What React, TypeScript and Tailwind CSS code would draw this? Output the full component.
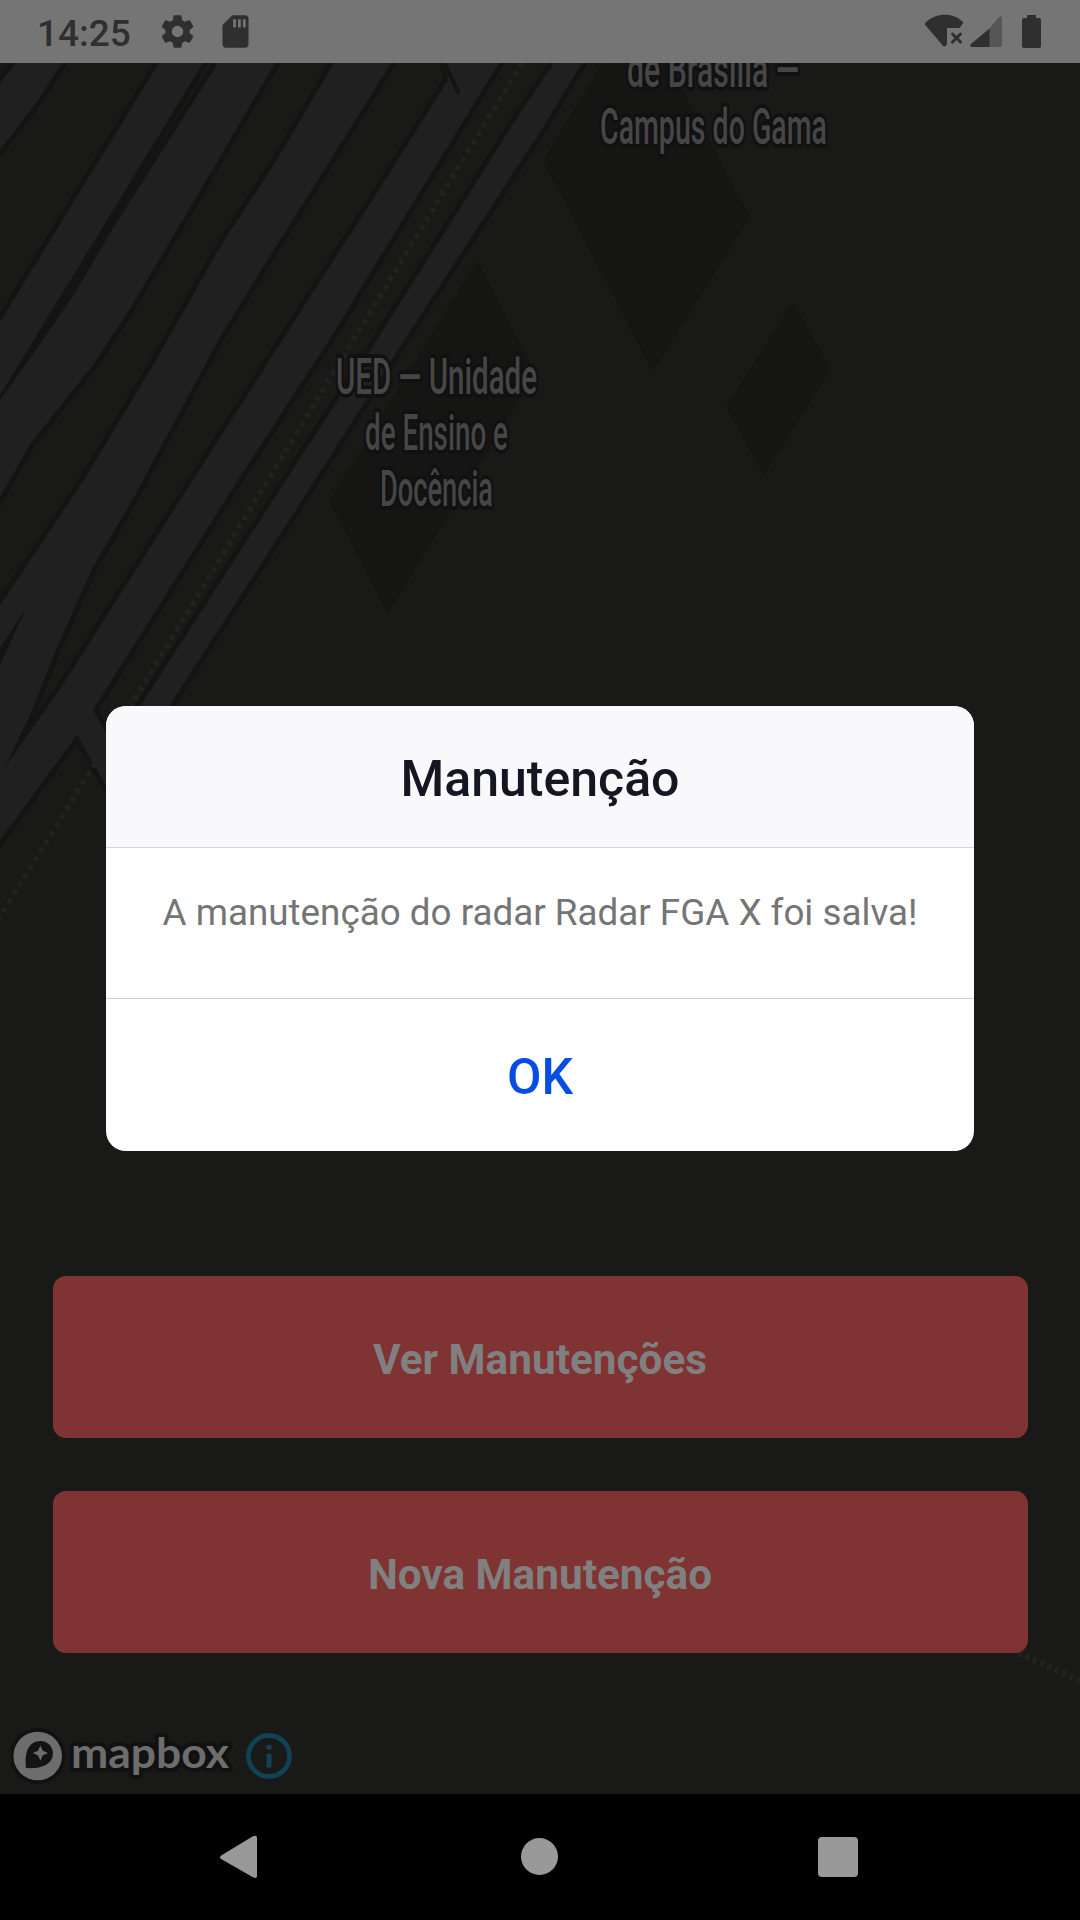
const ROAD = "#202020";
const CASING = "#141413";
const LAND = "#191917";

const roads = [
  "15.5,63 62,63 38,100 0,150 -20,178 -20,109 0,83",
  "159,63 203,63 93,243 0,395 -20,427 -20,355 0,322",
  "218,63 275,63 220,157 165,250 131,307 93,365 31,443 0,497 -20,530 -20,430 0,400 38,347 75,293 110,233",
  "334,63 391,63 324,170 255,280 220,337 134,497 93,567 57,647 31,713 5,767 -20,800 -20,710 0,665 26,608 0,648 -20,675 -20,636 0,605 84,480 152,367 194,293 220,247 275,163",
  "441,50 507,50 499,63 413,203 331,337 238,480 93,710 122,760 122,813 77,735 0,840 -20,868 -20,800 5,767 31,730 64,683 193,480 310,297 379,190 448,80",
  "563,50 590,50 540,132 396,353 315,480 141,750 112,750 286,480 375,343 520,113",
];

const labels = [
  { text: "de Brasília —", x: 627, y: 86.5, w: 172 },
  { text: "Campus do Gama", x: 600, y: 143.5, w: 227 },
  { text: "UED — Unidade", x: 336, y: 394, w: 201 },
  { text: "de Ensino e", x: 365, y: 450, w: 143 },
  { text: "Docência", x: 380, y: 505.5, w: 113 },
];

function MapCanvas() {
  return (
    <svg className="absolute inset-0" width="1080" height="1731" viewBox="0 63 1080 1731">
      <rect x="0" y="63" width="1080" height="1731" fill={LAND} />
      <g fill="#151513" stroke="#121210" strokeWidth="0.6">
        <polygon points="603,63 544,161 653,370 749,217 668,63" />
        <polygon points="793,303 830,369 764,474 727,407" />
        <polygon points="477,262 535,373 388,612 330,501" />
      </g>
      <g fill={CASING} stroke={CASING} strokeWidth="10">
        {roads.map((p) => <polygon key={p} points={p} />)}
      </g>
      <g fill={ROAD}>
        {roads.map((p) => <polygon key={p} points={p} />)}
      </g>
      <path d="M442 58L459 94" stroke={CASING} strokeWidth="4" />
      <g stroke="#212121" strokeWidth="5.500" strokeDasharray="5 5" fill="none">
        <path d="M522 63L131 705" />
        <path d="M95 763L-5 925" />
        <path d="M1018 1653L1084 1682" strokeWidth="7" strokeDasharray="4.5 3.5" />
      </g>
      <g fontFamily="Roboto, sans-serif" fontSize="50" fontWeight="500" fill="#464646" stroke="#111111" strokeWidth="8" strokeLinejoin="round" paintOrder="stroke">
        {labels.map((l) => (
          <text key={l.text} x={l.x} y={l.y} textLength={l.w} lengthAdjust="spacingAndGlyphs">{l.text}</text>
        ))}
      </g>
    </svg>
  );
}

function StatusBar() {
  return (
    <header className="flex h-[63px] shrink-0 items-center bg-[#757575] pl-[37px] pr-[38px] text-[#2f2f2f]">
      <span className="pt-[3px] text-[37px] font-medium leading-none">14:25</span>
      <svg className="ml-[27px] size-[39px]" viewBox="0 0 24 24" fill="currentColor">
        <path d="M19.43 12.98c.04-.32.07-.64.07-.98s-.03-.66-.07-.98l2.11-1.65c.19-.15.24-.42.12-.64l-2-3.46c-.12-.22-.39-.3-.61-.22l-2.49 1c-.52-.4-1.08-.73-1.69-.98l-.38-2.65C14.46 2.18 14.25 2 14 2h-4c-.25 0-.46.18-.49.42l-.38 2.65c-.61.25-1.17.59-1.69.98l-2.49-1c-.23-.09-.49 0-.61.22l-2 3.46c-.13.22-.07.49.12.64l2.11 1.65c-.04.32-.07.65-.07.98s.03.66.07.98l-2.11 1.65c-.19.15-.24.42-.12.64l2 3.46c.12.22.39.3.61.22l2.49-1c.52.4 1.08.73 1.69.98l.38 2.65c.03.24.24.42.49.42h4c.25 0 .46-.18.49-.42l.38-2.65c.61-.25 1.17-.59 1.69-.98l2.49 1c.23.09.49 0 .61-.22l2-3.46c.12-.22.07-.49-.12-.64zM12 15.5A3.5 3.5 0 1 1 12 8.500a3.500 3.500 0 0 1 0 7z" />
      </svg>
      <svg className="ml-[19px] size-[39px]" viewBox="0 0 24 24" fill="currentColor">
        <path d="M18 2h-8L4.020 8 4 20c0 1.100.9 2 2 2h12c1.100 0 2-.9 2-2V4c0-1.100-.9-2-2-2z" />
        <path d="M11.400 4.500v5M14.400 4.500v5M17.400 4.500v5" stroke="#757575" strokeWidth="1.700" />
      </svg>
      <span className="flex-1" />
      <svg width="118" height="36" viewBox="0 0 118 36" fill="currentColor">
        <path d="M1.500 8.500C12-2 30-2 39.500 8.500L35.500 14H23V30q-2.500 5-5.500 0L.8 10.500z" />
        <path d="M28.500 20L36.500 28M36.500 20L28.500 28" stroke="currentColor" strokeWidth="3" strokeLinecap="round" />
        <path d="M78 4L78 31q0 2-2 2H65V15L75 3q3-2 3 1z" fill="#565656" />
        <path d="M65.500 14.500V33H48q-3-.5-1-3z" />
        <path d="M103 1h9v3h3q2 0 2 2v26q0 2-2 2h-15q-2 0-2-2V6q0-2 2-2h3z" />
      </svg>
    </header>
  );
}

function MapboxMark() {
  return (
    <div className="absolute bottom-[13px] left-[11px] flex h-[50px] items-center">
      <svg width="235" height="58" viewBox="0 0 235 58">
        <circle cx="26.700" cy="29" r="28" fill="#111" />
        <circle cx="26.700" cy="29" r="24.300" fill="#6d6d6d" />
        <path d="M15 41C13 25 18 14 29.500 14A12.500 12.500 0 0 1 37 36.500C31 41 22 41.500 15 41z" fill="#131313" />
        <path d="M29.400 18.500l2.300 5.300 5.300 2.300-5.300 2.300-2.300 5.300-2.300-5.300-5.300-2.300 5.300-2.300z" fill="#6d6d6d" />
        <text x="60" y="40.500" textLength="158" lengthAdjust="spacingAndGlyphs" fontFamily="Lato, sans-serif" fontSize="42" fontWeight="700" fill="#6d6d6d" stroke="#111111" strokeWidth="8" strokeLinejoin="round" paintOrder="stroke">mapbox</text>
      </svg>
      <svg width="46" height="46" viewBox="0 0 46 46">
        <circle cx="23" cy="23" r="20.500" fill="none" stroke="#0f4252" strokeWidth="4.800" />
        <path d="M20.500 12h5v4.500h-5zM20.500 20.500h5v14h-5z" fill="#0f4252" />
      </svg>
    </div>
  );
}

export default function App() {
  return (
    <div className="flex h-[1920px] w-[1080px] flex-col overflow-hidden bg-black font-[Roboto,sans-serif]">
      <StatusBar />
      <main className="relative flex h-[1731px] shrink-0 flex-col items-center overflow-hidden">
        <MapCanvas />
        <section className="relative mt-[643px] flex h-[445px] w-[868px] shrink-0 flex-col overflow-hidden rounded-[20px] bg-white text-center">
          <h1 className="flex h-[142px] items-center justify-center border-b border-[#d5d5d9] bg-[#f9f9fb] pt-[5px] text-[50px] font-medium text-[#141622]">Manutenção</h1>
          <p className="flex h-[150px] items-center justify-center whitespace-nowrap pb-[20px] text-[36.8px] text-[#757575]">A manutenção do radar Radar FGA X foi salva!</p>
          <button className="flex flex-1 items-center justify-center border-t border-[#cfcfd3] pt-[5px] text-[50px] font-medium text-[#054de3]">OK</button>
        </section>
        <div className="relative mt-[125px] flex w-[975px] flex-col gap-[53px]">
          <button className="h-[162px] rounded-[13px] bg-[#7f3333] pt-[6px] text-[42.3px] font-bold text-[#808080]">Ver Manutenções</button>
          <button className="h-[162px] rounded-[13px] bg-[#7f3333] pt-[6px] text-[42.3px] font-bold text-[#808080]">Nova Manutenção</button>
        </div>
        <MapboxMark />
      </main>
      <nav className="flex flex-1 items-center bg-black text-[#999]">
        <svg width="1080" height="126" viewBox="0 1794 1080 126" fill="currentColor">
          <path d="M222 1855L252.500 1836.500Q257 1834.500 257 1838V1876Q257 1879.500 252.500 1877L222 1859.500Q218 1857 222 1855z" />
          <circle cx="539.500" cy="1856.500" r="18.500" />
          <rect x="818" y="1837" width="40" height="40" rx="4" />
        </svg>
      </nav>
    </div>
  );
}
